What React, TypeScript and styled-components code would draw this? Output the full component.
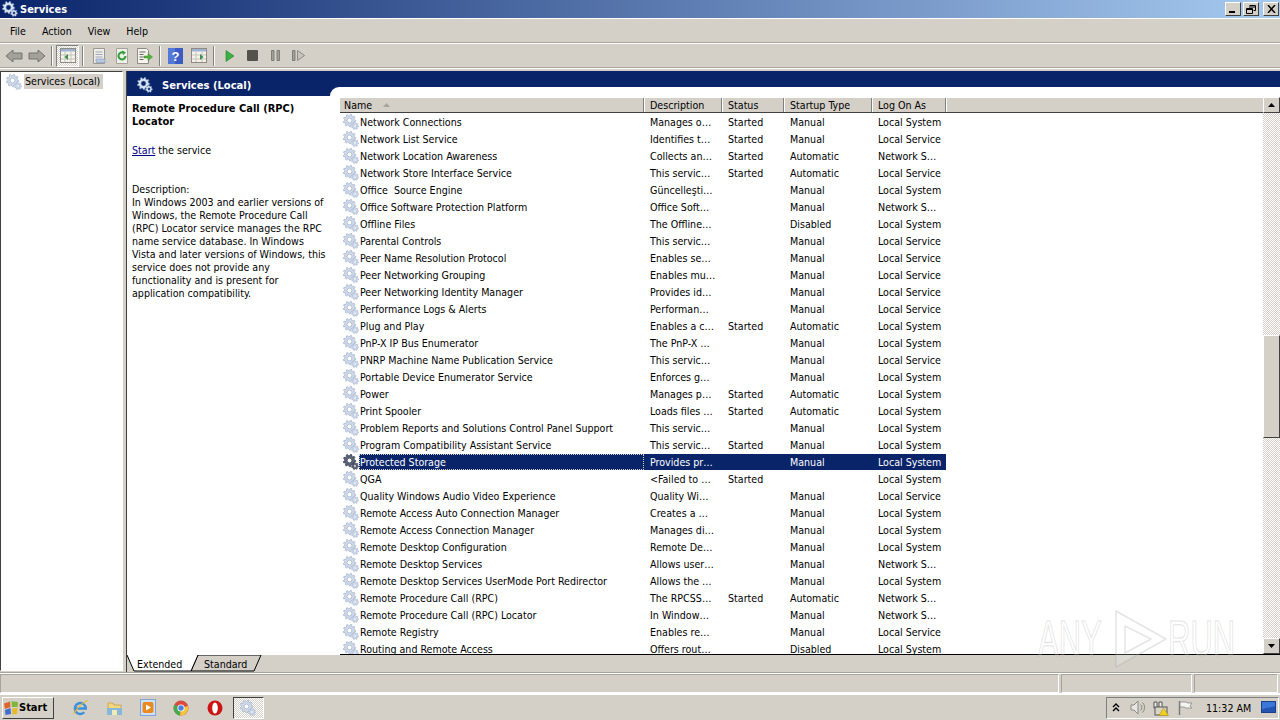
import React from "react";
import styled, { createGlobalStyle } from "styled-components";

const UI_FONT = `"DejaVu Sans", "Noto Sans", sans-serif`;

const Global = createGlobalStyle`
  html, body { margin: 0; padding: 0; height: 100%; overflow: hidden; }
  body { font-family: ${UI_FONT}; font-stretch: condensed; font-size: 10.6px; color: #000; }
  * { box-sizing: border-box; }
`;

const Screen = styled.div`
  width: 1280px; height: 720px; display: flex; flex-direction: column;
  background: #d4d0c8; overflow: hidden; position: relative;
`;
const TitleBar = styled.div`
  height: 18px; flex: none; display: flex; align-items: center; padding: 0 1px 0 2px; gap: 2px;
  background: linear-gradient(90deg, #0a246a 0%, #a6caf0 100%);
`;
const TitleText = styled.div`
  color: #fff; font-weight: 700; font-size: 11px; flex: 1; line-height: 18px; padding-top: 1px;
`;
const WinBtn = styled.div<{ $gap?: number }>`
  width: 16px; height: 14px; background: #d4d0c8; margin-left: ${(p) => p.$gap ?? 0}px;
  border: 1px solid; border-color: #fff #404040 #404040 #fff;
  display: flex; align-items: center; justify-content: center;
`;
const MenuBar = styled.div`
  height: 25px; flex: none; display: flex; align-items: center; padding: 1px 0 0 3px;
  border-top: 1px solid #fff; border-bottom: 1px solid #a8a49c;
`;
const MenuItem = styled.div`
  padding: 0 7px 0 7px; margin-right: 2px; color: #000;
`;
const ToolBar = styled.div`
  height: 25px; flex: none; display: flex; align-items: center; padding-left: 2px;
  border-top: 1px solid #fff; border-bottom: 1px solid #a8a49c;
`;
const ToolBtn = styled.div<{ $w?: number; $on?: boolean }>`
  width: ${(p) => p.$w ?? 23}px; height: 22px; display: flex; align-items: center; justify-content: center; flex: none;
  ${(p) => p.$on && "border: 1px solid; border-color: #808080 #fff #fff #808080; background: repeating-conic-gradient(#d4d0c8 0 25%, #fff 0 50%) 0 0/2px 2px;"}
`;
const ToolSep = styled.div`
  width: 2px; height: 20px; margin: 0 3px; border-left: 1px solid #808080; border-right: 1px solid #fff; flex: none;
`;
const Main = styled.div`
  flex: 1; min-height: 0; display: flex; padding-top: 2px; gap: 3px; border-top: 1px solid #fff;
`;
const TreePane = styled.div`
  width: 123px; flex: none; background: #fff; margin-bottom: 2px; padding: 2px 0 0 5px;
  border: 1px solid; border-color: #404040 #fff #fff #404040;
  display: flex; align-items: flex-start; gap: 2px;
`;
const TreeLabel = styled.div`
  background: #d4d0c8; width: 79px; padding-left: 1px; height: 15px; line-height: 15px; white-space: pre;
`;
const Content = styled.div`
  flex: 1; min-width: 0; display: flex; flex-direction: column; border-left: 1px solid #404040;
`;
const PanelHead = styled.div`
  height: 25px; flex: none; background: #0a246a; display: flex; align-items: center; gap: 9px; padding: 2px 0 0 10px;
  position: relative;
`;
const PanelTitle = styled.div`
  color: #fff; font-weight: 700; font-size: 11.1px; padding-top: 1px;
`;
const HeadCurve = styled.div`
  position: absolute; left: 203px; right: 0; bottom: 0; height: 9px; background: #fff; border-radius: 9px 0 0 0;
`;
const PanelBody = styled.div`
  flex: 1; min-height: 0; display: flex; background: #fff;
`;
const Desc = styled.div`
  width: 213px; flex: none; padding: 6px 10px 0 5px; line-height: 13px;
`;
const DescTitle = styled.div`
  font-weight: 700; font-size: 11px; margin-bottom: 16px;
`;
const DescLink = styled.p`
  margin: 0 0 26px; a { color: #000080; text-decoration: underline; }
`;
const DescPara = styled.div``;
const ListWrap = styled.div`
  flex: 1; min-width: 0; display: flex; flex-direction: column; border-bottom: 1px solid #000; overflow: hidden; margin-top: 1px;
`;
const ListHead = styled.div`
  height: 16px; flex: none; display: flex; background: #d4d0c8; border-bottom: 1px solid #404040; border-top: 1px solid #fff;
`;
const HeadCell = styled.div<{ $w: number }>`
  width: ${(p) => p.$w}px; flex: none; padding-left: ${(p) => (p.$w > 200 ? 4 : 6)}px; line-height: 14px;
  border-right: 1px solid #808080; box-shadow: 1px 0 0 #fff; display: flex; align-items: center; gap: 8px; white-space: pre;
`;
const HeadRest = styled.div` flex: 1; `;
const SortMark = styled.svg` flex: none; `;
const Rows = styled.div` flex: 1; min-height: 0; overflow: hidden; `;
const Row = styled.div`
  height: 17px; width: 606px; display: flex; align-items: center;
`;
const NameCell = styled.div`
  width: 304px; flex: none; display: flex; align-items: center; height: 17px; padding-left: 3px; gap: 0;
  white-space: pre;
`;
const NameText = styled.div<{ $sel?: boolean }>`
  flex: 1; height: 16px; line-height: 16px; padding-left: 1px;
  ${(p) => p.$sel && "background:#0a246a; color:#fff; outline:1px dotted #d4d0c8; outline-offset:-1px;"}
`;
const Cell = styled.div<{ $w: number; $sel?: boolean }>`
  width: ${(p) => p.$w}px; flex: none; height: 16px; line-height: 16px; padding-left: 6px; white-space: pre;
  ${(p) => p.$sel && "background:#0a246a; color:#fff;"}
`;
const ScrollBar = styled.div`
  width: 17px; flex: none; display: flex; flex-direction: column; margin-top: 1px; border-bottom: 1px solid #000;
  background: repeating-conic-gradient(#d4d0c8 0 25%, #fff 0 50%) 0 0/2px 2px;
`;
const ScrollBtn = styled.div`
  height: 16px; flex: none; background: #d4d0c8; border: 1px solid; border-color: #fff #404040 #404040 #fff;
  display: flex; align-items: center; justify-content: center;
`;
const Track = styled.div` flex: 1; min-height: 0; padding-top: 222px; `;
const Thumb = styled.div`
  height: 103px; background: #d4d0c8; border: 1px solid; border-color: #fff #404040 #404040 #fff;
`;
const TabStrip = styled.div`
  height: 17px; flex: none; display: flex; align-items: flex-start; margin-bottom: 1px;
`;
const StatusBar = styled.div`
  height: 21px; flex: none; display: flex; border-top: 1px solid #fff; border-bottom: 1px solid #fff;
  box-shadow: 0 -1px 0 #a8a49c;
`;
const StatusCell = styled.div<{ $w?: number }>`
  ${(p) => (p.$w ? `width:${p.$w}px;flex:none;` : "flex:1;")}
  margin-right: 2px; border: 1px solid; border-color: #a8a49c #fff #fff #a8a49c;
`;
const TaskBar = styled.div`
  height: 26px; flex: none; display: flex; align-items: center; padding: 0 1px 0 2px; border-top: 1px solid #fff;
`;
const StartBtn = styled.div`
  width: 52px; height: 22px; flex: none; display: flex; align-items: center; padding-left: 0;
  font-weight: 700; font-size: 11px; border: 1px solid; border-color: #fff #404040 #404040 #fff; background: #d4d0c8;
`;
const QuickLaunch = styled.div`
  display: flex; align-items: center; gap: 0; margin-left: 10px; flex: 1;
`;
const Quick = styled.div`
  width: 33.5px; height: 22px; display: flex; align-items: center; justify-content: center; flex: none;
`;
const ActiveTask = styled.div`
  width: 31px; height: 22px; display: flex; align-items: center; justify-content: center; flex: none; margin-left: 1px;
  border: 1px solid; border-color: #404040 #fff #fff #404040;
  background: repeating-conic-gradient(#d4d0c8 0 25%, #fff 0 50%) 0 0/2px 2px;
`;
const Tray = styled.div`
  width: 173px; height: 22px; flex: none; display: flex; align-items: center; padding-left: 5px;
  border: 1px solid; border-color: #808080 #fff #fff #808080;
`;
const TrayGap = styled.div<{ $w: number }>` width: ${(p) => p.$w}px; flex: none; `;
const Clock = styled.div` margin-left: 13px; white-space: pre; width: 55px; `;
const WatermarkBox = styled.div`
  position: absolute; left: 1038px; top: 607px; display: flex; align-items: center; pointer-events: none;
`;
const WatermarkText = styled.div`
  font-family: "Liberation Sans", sans-serif; font-stretch: normal; font-size: 50px; line-height: 64px; letter-spacing: 0;
  color: rgba(255,255,255,.2); -webkit-text-stroke: 1.2px rgba(170,170,170,.34);
  transform: scaleX(.62); transform-origin: left center; white-space: pre;
`;
const WatermarkAny = styled(WatermarkText)` width: 72px; `;
const WatermarkRun = styled(WatermarkText)` width: 66px; margin-left: -2px; `;

function gearPath(cx: number, cy: number, r: number, teeth: number) {
  const pts: string[] = [];
  const n = teeth * 4;
  for (let i = 0; i < n; i++) {
    const a = (i / n) * Math.PI * 2;
    const rr = i % 4 < 2 ? r : r * 0.76;
    pts.push(`${(cx + rr * Math.cos(a)).toFixed(2)} ${(cy + rr * Math.sin(a)).toFixed(2)}`);
  }
  return `M${pts.join("L")}Z`;
}
const bigGear = gearPath(6.5, 6.5, 6.3, 9);
const smallGear = gearPath(12, 12, 3.6, 7);

const Gear = ({ dark, white }: { dark?: boolean; white?: boolean }) => {
  const a = white ? "#dfe8f5" : dark ? "#5b6478" : "#cfd9e9";
  const b = white ? "#5f7fb0" : dark ? "#2d3548" : "#9fb0cc";
  const hole = white ? "#0a246a" : "#fff";
  return (
    <svg width="16" height="16" viewBox="0 0 16 16" style={{ flex: "none" }}>
      <path d={bigGear} fill={a} stroke={b} strokeWidth=".7" />
      <circle cx="6.5" cy="6.5" r="2.4" fill={hole} stroke={b} strokeWidth=".7" />
      <path d={smallGear} fill={a} stroke={b} strokeWidth=".6" />
      <circle cx="12" cy="12" r="1.2" fill={hole} stroke={b} strokeWidth=".4" />
    </svg>
  );
};

const Arrow = ({ dir }: { dir: "left" | "right" }) => (
  <svg width="18" height="14" viewBox="0 0 18 14">
    <path d={dir === "left" ? "M1 7 8 1v3h9v6H8v3Z" : "M17 7 10 1v3H1v6h9v3Z"} fill="#a3a199" stroke="#75736d" />
  </svg>
);
const PaneIcon = ({ right }: { right?: boolean }) => (
  <svg width="16" height="15" viewBox="0 0 16 15">
    <rect x=".5" y=".5" width="15" height="14" fill="#f4f2ea" stroke="#8d8b84" />
    <rect x="1" y="1" width="14" height="2.5" fill="#9fb2d0" />
    <path d="M1 7h14M1 11h14M5 4v10M11 4v10" stroke="#c5c3bb" />
    <path d={right ? "M9 6v6l3.500-3Z" : "M8 6v6L4.500 9Z"} fill="#3c8f4c" />
  </svg>
);
const DocIcon = () => (
  <svg width="16" height="16" viewBox="0 0 16 16">
    <path d="M2.500.5h11v15h-11Z" fill="#f0eee8" stroke="#9a9890" />
    <path d="M4.500 4h7M4.500 6.500h7M4.500 9h7" stroke="#9aa7bd" />
    <rect x="5" y="11" width="9" height="3.500" fill="#b8c9e2" stroke="#7f93b6" strokeWidth=".6" />
  </svg>
);
const RefreshIcon = () => (
  <svg width="16" height="16" viewBox="0 0 16 16">
    <path d="M2.500.5h11v15h-11Z" fill="#eef1e8" stroke="#a5a399" />
    <path d="M11.500 8a3.500 3.500 0 1 1-1.500-3" fill="none" stroke="#2f9e3a" strokeWidth="2" />
    <path d="M8 2.500 12 4.500 9 7Z" fill="#2f9e3a" />
  </svg>
);
const ExportIcon = () => (
  <svg width="17" height="16" viewBox="0 0 17 16">
    <path d="M1.500.5h9l2 2v13h-11Z" fill="#f6f4ee" stroke="#8d8b84" />
    <path d="M3.500 4h6M3.500 6.500h4M3.500 9h4M3.500 11.500h4" stroke="#666" />
    <path d="M8 8h4V5.500L16.500 9 12 12.500V10H8Z" fill="#55b03f" stroke="#3c8f2e" strokeWidth=".5" />
  </svg>
);
const HelpIcon = () => (
  <svg width="15" height="16" viewBox="0 0 15 16">
    <rect width="15" height="16" fill="#3a5cc4" />
    <rect x="0" y="0" width="7" height="16" fill="#5478d8" />
    <text x="7.500" y="13" fontSize="13" fontWeight="700" textAnchor="middle" fill="#fff" fontFamily="Liberation Sans">?</text>
  </svg>
);
const Play = () => <svg width="10" height="12" viewBox="0 0 10 12"><path d="M1 .5 9 6 1 11.500Z" fill="#3cb043" stroke="#1f8a2c" strokeWidth=".6" /></svg>;
const Stop = () => <svg width="11" height="11" viewBox="0 0 11 11"><rect width="11" height="11" rx="1" fill="#55524c" /></svg>;
const Pause = () => <svg width="9" height="11" viewBox="0 0 9 11"><path d="M.5.500h2.500v10H.5ZM6 .5h2.500v10H6Z" fill="#a3a199" stroke="#6f6d67" strokeWidth=".8" /></svg>;
const Resume = () => <svg width="13" height="11" viewBox="0 0 13 11"><path d="M.5.500h2.500v10H.5Z" fill="#a3a199" stroke="#6f6d67" strokeWidth=".8" /><path d="M5.500 .5 12.500 5.500 5.500 10.500Z" fill="#c6c4bc" stroke="#7d7b75" strokeWidth=".8" /></svg>;

const Tri = ({ up }: { up?: boolean }) => (
  <svg width="7" height="4" viewBox="0 0 7 4"><path d={up ? "M3.500 0 7 4H0Z" : "M0 0h7L3.500 4Z"} fill="#000" /></svg>
);

const Tabs = () => (
  <svg width="136" height="17" viewBox="0 0 136 17" style={{ flex: "none" }}>
    <path d="M64 16H127L134 0H71Z" fill="#d4d0c8" stroke="#000" />
    <path d="M0 0 7 16H64L71 0" fill="#fff" stroke="#000" />
    <text x="10" y="13" fontSize="10.6" fontFamily="DejaVu Sans" fontStretch="condensed" fill="#000">Extended</text>
    <text x="77" y="13" fontSize="10.6" fontFamily="DejaVu Sans" fontStretch="condensed" fill="#000">Standard</text>
  </svg>
);

const WinLogo = () => (
  <svg width="16" height="16" viewBox="0 0 16 16" style={{ flex: "none" }}>
    <path d="M1 3.500 7 1.500 7.500 7 2 9Z" fill="#e0642a" />
    <path d="M8.500 1.200 15 2 14.500 7 9 7Z" fill="#7fb53a" />
    <path d="M2 10 7.500 8 8 14 2.500 15Z" fill="#3c6fd0" />
    <path d="M9 8.500 14.500 8 14 14 9.500 14.500Z" fill="#e8b92c" />
  </svg>
);
const IEIcon = () => (
  <svg width="17" height="17" viewBox="0 0 17 17">
    <path d="M2.800 9.500h11a5.500 5.500 0 1 0-1.500 3.800" fill="none" stroke="#3d8fdc" strokeWidth="2.400" />
    <path d="M1.500 15C4.500 10 11 3 15.500 1.500" fill="none" stroke="#e8b92c" strokeWidth="1.200" />
  </svg>
);
const FolderIcon = () => (
  <svg width="17" height="16" viewBox="0 0 17 16">
    <path d="M2 3h5l1 2h7v9H2Z" fill="#f0d880" stroke="#c8a850" />
    <rect x="1" y="8" width="15" height="7" fill="#87b8d8" />
    <rect x="6" y="10" width="5" height="5" fill="#f4e9b8" />
  </svg>
);
const MediaIcon = () => (
  <svg width="16" height="17" viewBox="0 0 16 17">
    <rect x=".5" y=".5" width="15" height="16" fill="#cfe0f4" stroke="#7fa6d6" />
    <rect x="2.500" y="3" width="11" height="11" rx="2" fill="#e88a1e" />
    <path d="M6 5.500v6l5-3Z" fill="#fff" />
  </svg>
);
const ChromeIcon = () => (
  <svg width="16" height="16" viewBox="0 0 16 16">
    <circle cx="8" cy="8" r="7.500" fill="#d94b3e" />
    <path d="M8 8 1.500 4.500A7.500 7.500 0 0 0 7 15.500Z" fill="#4aa84f" />
    <path d="M8 8 7 15.500A7.500 7.500 0 0 0 15 6Z" fill="#f2c73c" />
    <circle cx="8" cy="8" r="3.600" fill="#fff" />
    <circle cx="8" cy="8" r="2.700" fill="#4b82e0" />
  </svg>
);
const OperaIcon = () => (
  <svg width="16" height="16" viewBox="0 0 16 16">
    <circle cx="8" cy="8" r="7.500" fill="#cc1414" />
    <ellipse cx="8" cy="8" rx="2.800" ry="5.500" fill="#fff" />
  </svg>
);
const ChevronUp = () => (
  <svg width="8" height="9" viewBox="0 0 8 9"><path d="M1 4 4 1 7 4M1 8 4 5 7 8" fill="none" stroke="#000" strokeWidth="1.400" /></svg>
);
const Speaker = () => (
  <svg width="16" height="15" viewBox="0 0 16 15">
    <path d="M1 5h3l4-4v13l-4-4H1Z" fill="#e8e6e0" stroke="#8a8880" />
    <path d="M10.500 4.500a4 4 0 0 1 0 6M12.500 2.500a7 7 0 0 1 0 10" fill="none" stroke="#8a8880" />
  </svg>
);
const NetWarn = () => (
  <svg width="16" height="16" viewBox="0 0 16 16">
    <path d="M1 2h3v6H1ZM6 2h3v6H6Z" fill="#f0eee6" stroke="#555" />
    <rect x="2" y="7" width="12" height="8" fill="#d8d4c6" stroke="#555" />
    <path d="M10.500 8 15.500 15.500H6Z" fill="#f2d020" stroke="#a08a10" strokeWidth=".5" />
  </svg>
);
const FlagIcon = () => (
  <svg width="16" height="16" viewBox="0 0 16 16">
    <path d="M2.500 1v14" stroke="#777" strokeWidth="1.400" />
    <path d="M3 2h6l2 1h4l-2 3 2 2H9L7 7H3Z" fill="#f4f3ee" stroke="#888" strokeWidth=".8" />
  </svg>
);
const ScreenIcon = () => (
  <svg width="15" height="13" viewBox="0 0 15 13">
    <rect x=".5" y=".5" width="14" height="11" fill="#3a78d8" stroke="#1c3f8a" />
    <path d="M1 8.500C5 6 10 7 14 5v6H1Z" fill="#2354b0" />
  </svg>
);
const PlayMark = () => (
  <svg width="60" height="64" viewBox="0 0 60 64" style={{ flex: "none" }}>
    <path d="M6 4V60L56 32Z M15 19V46L41 32Z" fill="rgba(255,255,255,.2)" stroke="rgba(170,170,170,.3)" strokeWidth="1.500" fillRule="evenodd" strokeLinejoin="round" />
  </svg>
);

type R = [string, string, string, string, string];
const rows: R[] = [
  ["Network Connections", "Manages o…", "Started", "Manual", "Local System"],
  ["Network List Service", "Identifies t…", "Started", "Manual", "Local Service"],
  ["Network Location Awareness", "Collects an…", "Started", "Automatic", "Network S…"],
  ["Network Store Interface Service", "This servic…", "Started", "Automatic", "Local Service"],
  ["Office  Source Engine", "Güncelleşti…", "", "Manual", "Local System"],
  ["Office Software Protection Platform", "Office Soft…", "", "Manual", "Network S…"],
  ["Offline Files", "The Offline…", "", "Disabled", "Local System"],
  ["Parental Controls", "This servic…", "", "Manual", "Local Service"],
  ["Peer Name Resolution Protocol", "Enables se…", "", "Manual", "Local Service"],
  ["Peer Networking Grouping", "Enables mu…", "", "Manual", "Local Service"],
  ["Peer Networking Identity Manager", "Provides id…", "", "Manual", "Local Service"],
  ["Performance Logs & Alerts", "Performan…", "", "Manual", "Local Service"],
  ["Plug and Play", "Enables a c…", "Started", "Automatic", "Local System"],
  ["PnP-X IP Bus Enumerator", "The PnP-X …", "", "Manual", "Local System"],
  ["PNRP Machine Name Publication Service", "This servic…", "", "Manual", "Local Service"],
  ["Portable Device Enumerator Service", "Enforces g…", "", "Manual", "Local System"],
  ["Power", "Manages p…", "Started", "Automatic", "Local System"],
  ["Print Spooler", "Loads files …", "Started", "Automatic", "Local System"],
  ["Problem Reports and Solutions Control Panel Support", "This servic…", "", "Manual", "Local System"],
  ["Program Compatibility Assistant Service", "This servic…", "Started", "Manual", "Local System"],
  ["Protected Storage", "Provides pr…", "", "Manual", "Local System"],
  ["QGA", "<Failed to …", "Started", "", "Local System"],
  ["Quality Windows Audio Video Experience", "Quality Wi…", "", "Manual", "Local Service"],
  ["Remote Access Auto Connection Manager", "Creates a …", "", "Manual", "Local System"],
  ["Remote Access Connection Manager", "Manages di…", "", "Manual", "Local System"],
  ["Remote Desktop Configuration", "Remote De…", "", "Manual", "Local System"],
  ["Remote Desktop Services", "Allows user…", "", "Manual", "Network S…"],
  ["Remote Desktop Services UserMode Port Redirector", "Allows the …", "", "Manual", "Local System"],
  ["Remote Procedure Call (RPC)", "The RPCSS…", "Started", "Automatic", "Network S…"],
  ["Remote Procedure Call (RPC) Locator", "In Window…", "", "Manual", "Network S…"],
  ["Remote Registry", "Enables re…", "", "Manual", "Local Service"],
  ["Routing and Remote Access", "Offers rout…", "", "Disabled", "Local System"],
];
const widths = [78, 62, 88, 74];

export default function App() {
  return (
    <Screen>
      <Global />
      <TitleBar>
        <Gear white />
        <TitleText>Services</TitleText>
        <WinBtn><svg width="8" height="8" viewBox="0 0 8 8"><path d="M0 6h6v2H0Z" fill="#000" /></svg></WinBtn>
        <WinBtn><svg width="10" height="9" viewBox="0 0 10 9"><path d="M3.500.5h6v5h-2M3 2h6M.5 3.500h6v5h-6ZM.5 4.500h6" fill="none" stroke="#000" /></svg></WinBtn>
        <WinBtn $gap={2}><svg width="9" height="8" viewBox="0 0 9 8"><path d="M1 0 8 8M8 0 1 8" stroke="#000" strokeWidth="1.500" /></svg></WinBtn>
      </TitleBar>
      <MenuBar>
        <MenuItem>File</MenuItem>
        <MenuItem>Action</MenuItem>
        <MenuItem>View</MenuItem>
        <MenuItem>Help</MenuItem>
      </MenuBar>
      <ToolBar>
        <ToolBtn><Arrow dir="left" /></ToolBtn>
        <ToolBtn><Arrow dir="right" /></ToolBtn>
        <ToolSep />
        <ToolBtn $on><PaneIcon /></ToolBtn>
        <ToolSep />
        <ToolBtn><DocIcon /></ToolBtn>
        <ToolBtn><RefreshIcon /></ToolBtn>
        <ToolBtn><ExportIcon /></ToolBtn>
        <ToolSep />
        <ToolBtn><HelpIcon /></ToolBtn>
        <ToolBtn><PaneIcon right /></ToolBtn>
        <ToolSep />
        <ToolBtn><Play /></ToolBtn>
        <ToolBtn><Stop /></ToolBtn>
        <ToolBtn><Pause /></ToolBtn>
        <ToolBtn><Resume /></ToolBtn>
      </ToolBar>
      <Main>
        <TreePane>
          <Gear />
          <TreeLabel>Services (Local)</TreeLabel>
        </TreePane>
        <Content>
          <PanelHead>
            <Gear white />
            <PanelTitle>Services (Local)</PanelTitle>
            <HeadCurve />
          </PanelHead>
          <PanelBody>
            <Desc>
              <DescTitle>Remote Procedure Call (RPC) Locator</DescTitle>
              <DescLink><a>Start</a> the service</DescLink>
              <DescPara>Description:<br />In Windows 2003 and earlier versions of Windows, the Remote Procedure Call (RPC) Locator service manages the RPC name service database. In Windows Vista and later versions of Windows, this service does not provide any functionality and is present for application compatibility.</DescPara>
            </Desc>
            <ListWrap>
              <ListHead>
                <HeadCell $w={304}>Name <SortMark width="7" height="4" viewBox="0 0 7 4"><path d="M3.500 0 7 4H0Z" fill="#a8a49c" /></SortMark></HeadCell>
                <HeadCell $w={78}>Description</HeadCell>
                <HeadCell $w={62}>Status</HeadCell>
                <HeadCell $w={88}>Startup Type</HeadCell>
                <HeadCell $w={74}>Log On As</HeadCell>
                <HeadRest />
              </ListHead>
              <Rows>
                {rows.map((r, i) => {
                  const sel = r[0] === "Protected Storage";
                  return (
                    <Row key={i}>
                      <NameCell>
                        <Gear dark={sel} />
                        <NameText $sel={sel}>{r[0]}</NameText>
                      </NameCell>
                      {widths.map((w, j) => <Cell key={j} $w={w} $sel={sel}>{r[j + 1]}</Cell>)}
                    </Row>
                  );
                })}
              </Rows>
            </ListWrap>
            <ScrollBar>
              <ScrollBtn><Tri up /></ScrollBtn>
              <Track><Thumb /></Track>
              <ScrollBtn><Tri /></ScrollBtn>
            </ScrollBar>
          </PanelBody>
          <TabStrip><Tabs /></TabStrip>
        </Content>
      </Main>
      <StatusBar>
        <StatusCell />
        <StatusCell $w={131} />
        <StatusCell $w={84} />
      </StatusBar>
      <TaskBar>
        <StartBtn><WinLogo />Start</StartBtn>
        <QuickLaunch>
          <Quick><IEIcon /></Quick>
          <Quick><FolderIcon /></Quick>
          <Quick><MediaIcon /></Quick>
          <Quick><ChromeIcon /></Quick>
          <Quick><OperaIcon /></Quick>
          <ActiveTask><Gear /></ActiveTask>
        </QuickLaunch>
        <Tray>
          <ChevronUp />
          <TrayGap $w={10} />
          <Speaker />
          <TrayGap $w={7} />
          <NetWarn />
          <TrayGap $w={8} />
          <FlagIcon />
          <Clock>11:32 AM</Clock>
          <ScreenIcon />
        </Tray>
      </TaskBar>
      <WatermarkBox>
        <WatermarkAny>ANY</WatermarkAny>
        <PlayMark />
        <WatermarkRun>RUN</WatermarkRun>
      </WatermarkBox>
    </Screen>
  );
}
